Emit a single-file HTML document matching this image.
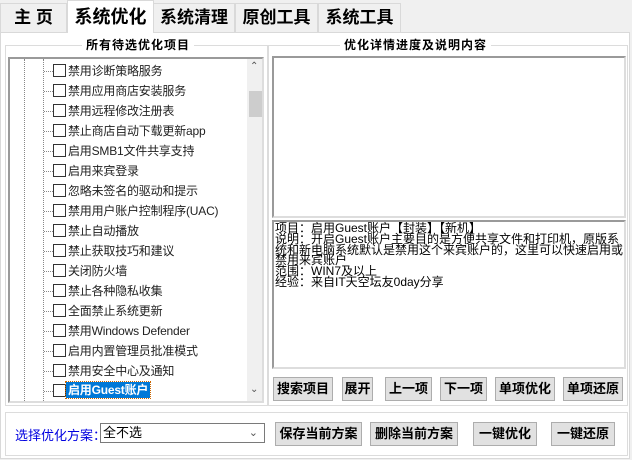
<!DOCTYPE html>
<html><head><meta charset="utf-8"><style>
*{margin:0;padding:0;box-sizing:border-box}
body{width:632px;height:460px;background:#f0f0f0;position:relative;overflow:hidden;font-family:"Liberation Sans","Noto Sans CJK SC",sans-serif;font-size:12px;color:#000}
.a{position:absolute}
.tab{position:absolute;top:3px;height:29px;border:1px solid #d9d9d9;border-bottom:none;background:#f0f0f0;font-size:17px;font-weight:bold;text-align:center;line-height:28px}
.tab.act{top:0;height:33px;background:#fff;z-index:2;line-height:32px;font-size:18px}
.page{position:absolute;left:0;top:32px;width:630px;height:427px;background:#fff;border:1px solid #d9d9d9}
.grp{position:absolute;border:1px solid #dcdcdc}
.leg{position:absolute;top:-8px;background:#fff;font-weight:bold;font-size:12px;padding:0 4px;line-height:14px;letter-spacing:1px}
.row{position:absolute;left:0;height:20px;width:240px}
.cb{position:absolute;left:43px;top:3px;width:13px;height:13px;border:1px solid #333;background:#fff}
.hl{position:absolute;left:34px;top:10px;width:9px;border-top:1px dotted #888}
.tx{position:absolute;left:58px;top:2px;font-size:12px;color:#222;white-space:nowrap;line-height:16px;letter-spacing:-0.2px}
.btn{position:absolute;height:24px;background:#e1e1e1;border:1px solid #adadad;font-weight:bold;font-size:13px;text-align:center;line-height:22px;white-space:nowrap}
</style></head><body>
<div class="tab" style="left:0;width:67px">主 页</div>
<div class="tab act" style="left:67px;width:87px">系统优化</div>
<div class="tab" style="left:153px;width:82px">系统清理</div>
<div class="tab" style="left:235px;width:83px">原创工具</div>
<div class="tab" style="left:318px;width:83px">系统工具</div>
<div class="page"></div>

<div class="grp" style="left:5px;top:45px;width:263px;height:361px">
 <div class="leg" style="left:76px">所有待选优化项目</div>
</div>
<div class="a" style="left:8px;top:57px;width:256px;height:346px;border:2px solid #9a9a9a;border-right-color:#ddd;border-bottom-color:#ddd;background:#fff;overflow:hidden">
 <div class="a" style="left:14px;top:0;height:346px;border-left:1px dotted #888"></div>
 <div class="a" style="left:33px;top:0;height:346px;border-left:1px dotted #888"></div>
 <div class="a" style="left:0;top:0">
  <div class="row" style="top:2px"><div class="hl"></div><div class="cb"></div><div class="tx">禁用诊断策略服务</div></div>
  <div class="row" style="top:22px"><div class="hl"></div><div class="cb"></div><div class="tx">禁用应用商店安装服务</div></div>
  <div class="row" style="top:42px"><div class="hl"></div><div class="cb"></div><div class="tx">禁用远程修改注册表</div></div>
  <div class="row" style="top:62px"><div class="hl"></div><div class="cb"></div><div class="tx">禁止商店自动下载更新app</div></div>
  <div class="row" style="top:82px"><div class="hl"></div><div class="cb"></div><div class="tx">启用SMB1文件共享支持</div></div>
  <div class="row" style="top:102px"><div class="hl"></div><div class="cb"></div><div class="tx">启用来宾登录</div></div>
  <div class="row" style="top:122px"><div class="hl"></div><div class="cb"></div><div class="tx">忽略未签名的驱动和提示</div></div>
  <div class="row" style="top:142px"><div class="hl"></div><div class="cb"></div><div class="tx">禁用用户账户控制程序(UAC)</div></div>
  <div class="row" style="top:162px"><div class="hl"></div><div class="cb"></div><div class="tx">禁止自动播放</div></div>
  <div class="row" style="top:182px"><div class="hl"></div><div class="cb"></div><div class="tx">禁止获取技巧和建议</div></div>
  <div class="row" style="top:202px"><div class="hl"></div><div class="cb"></div><div class="tx">关闭防火墙</div></div>
  <div class="row" style="top:222px"><div class="hl"></div><div class="cb"></div><div class="tx">禁止各种隐私收集</div></div>
  <div class="row" style="top:242px"><div class="hl"></div><div class="cb"></div><div class="tx">全面禁止系统更新</div></div>
  <div class="row" style="top:262px"><div class="hl"></div><div class="cb"></div><div class="tx">禁用Windows Defender</div></div>
  <div class="row" style="top:282px"><div class="hl"></div><div class="cb"></div><div class="tx">启用内置管理员批准模式</div></div>
  <div class="row" style="top:302px"><div class="hl"></div><div class="cb"></div><div class="tx">禁用安全中心及通知</div></div>
  <div class="row" style="top:322px"><div class="hl"></div><div class="cb"></div><div class="tx" style="left:56px;top:1px;background:#0078d7;color:#fff;font-weight:bold;padding:0 2px;outline:1px dotted #c60">启用Guest账户</div></div>
 </div>
 <div class="a" style="left:237px;top:0;width:17px;height:342px;background:#f0f0f0"></div>
 <div class="a" style="left:239px;top:32px;width:13px;height:26px;background:#cdcdcd"></div>
 <div class="a" style="left:240px;top:2px;font-size:10px;color:#555">&#8963;</div>
 <div class="a" style="left:240px;top:325px;font-size:10px;color:#555">&#8964;</div>
</div>

<div class="grp" style="left:268px;top:45px;width:360px;height:361px">
 <div class="leg" style="left:71px">优化详情进度及说明内容</div>
</div>
<div class="a" style="left:272px;top:56px;width:354px;height:162px;border:2px solid #9a9a9a;border-right-color:#ddd;border-bottom-color:#ddd;background:#fff"></div>
<div class="a" style="left:272px;top:220px;width:354px;height:149px;border:2px solid #9a9a9a;border-right-color:#ddd;border-bottom-color:#ddd;background:#fff;font-size:12px;line-height:10.8px;padding:1px 1px;letter-spacing:0;overflow:hidden">项目：启用Guest账户【封装】【新机】<br>说明：开启Guest账户主要目的是方便共享文件和打印机，原版系<br>统和新电脑系统默认是禁用这个来宾账户的，这里可以快速启用或<br>禁用来宾账户<br>范围：WIN7及以上<br>经验：来自IT天空坛友0day分享</div>

<div class="btn" style="left:273px;top:377px;width:60px">搜索项目</div>
<div class="btn" style="left:342px;top:377px;width:31px">展开</div>
<div class="btn" style="left:385px;top:377px;width:47px">上一项</div>
<div class="btn" style="left:440px;top:377px;width:47px">下一项</div>
<div class="btn" style="left:495px;top:377px;width:60px">单项优化</div>
<div class="btn" style="left:563px;top:377px;width:60px">单项还原</div>

<div class="grp" style="left:5px;top:412px;width:623px;height:44px"></div>
<div class="a" style="left:15px;top:425px;color:#0000e0;font-size:13px">选择优化方案：</div>
<div class="a" style="left:100px;top:423px;width:165px;height:20px;border:1px solid #7a7a7a;background:#fff;font-size:13px;line-height:18px;padding-left:2px">全不选<span style="position:absolute;right:6px;top:0;color:#555;font-size:11px">&#8964;</span></div>
<div class="btn" style="left:275px;top:422px;width:87px">保存当前方案</div>
<div class="btn" style="left:370px;top:422px;width:88px">删除当前方案</div>
<div class="btn" style="left:473px;top:422px;width:64px">一键优化</div>
<div class="btn" style="left:551px;top:422px;width:64px">一键还原</div>
</body></html>
